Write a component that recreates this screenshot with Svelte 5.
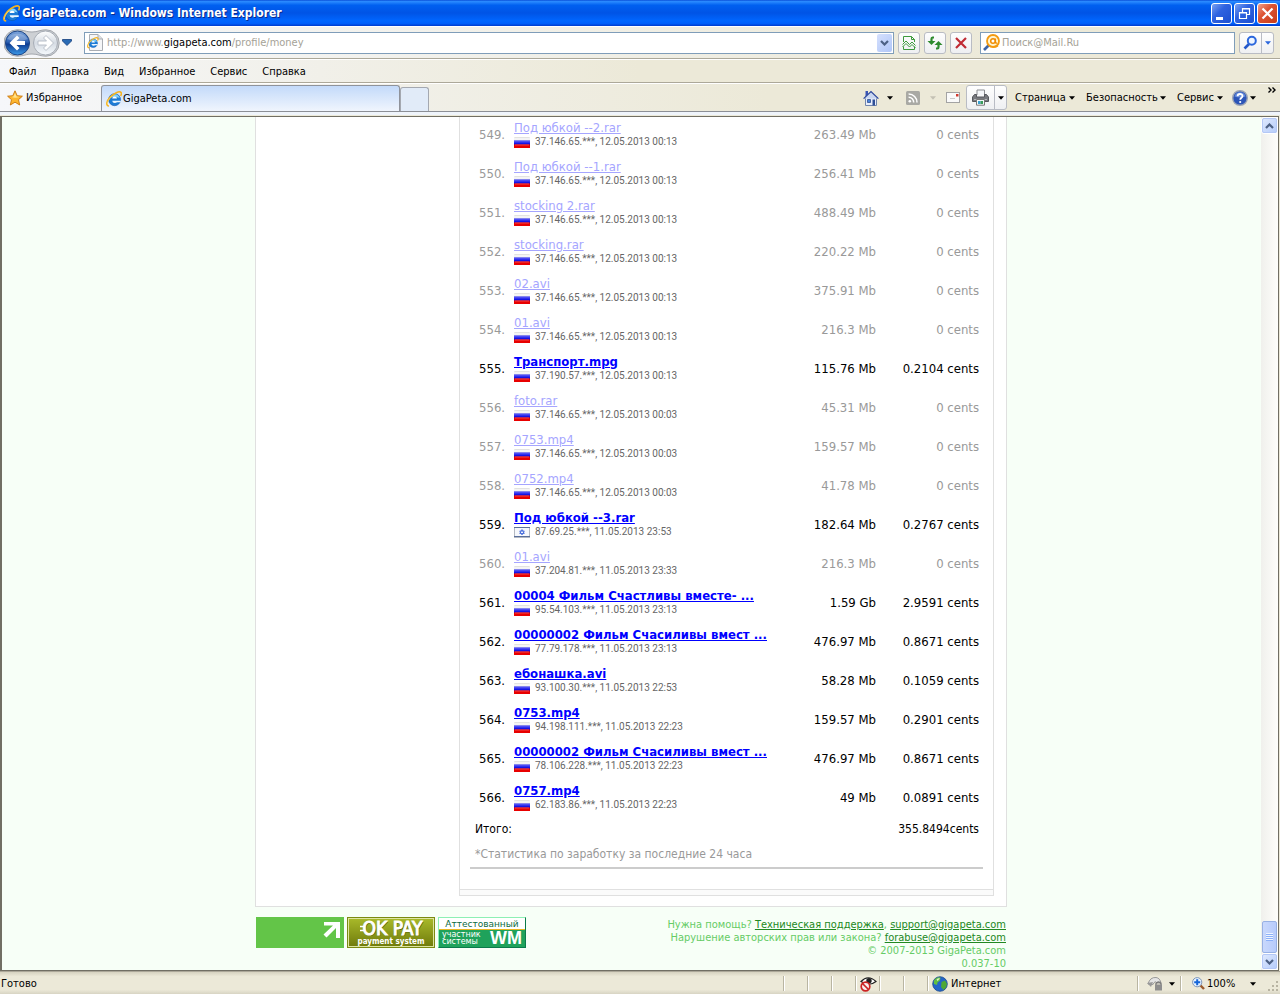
<script lang="ts">
  type Row = { n: number; name: string; ip: string; when: string; size: string; cents: string; paid?: boolean; il?: boolean };
  const rows: Row[] = [
    { n: 549, name: 'Под юбкой --2.rar', ip: '37.146.65.***', when: '12.05.2013 00:13', size: '263.49 Mb', cents: '0' },
    { n: 550, name: 'Под юбкой --1.rar', ip: '37.146.65.***', when: '12.05.2013 00:13', size: '256.41 Mb', cents: '0' },
    { n: 551, name: 'stocking 2.rar', ip: '37.146.65.***', when: '12.05.2013 00:13', size: '488.49 Mb', cents: '0' },
    { n: 552, name: 'stocking.rar', ip: '37.146.65.***', when: '12.05.2013 00:13', size: '220.22 Mb', cents: '0' },
    { n: 553, name: '02.avi', ip: '37.146.65.***', when: '12.05.2013 00:13', size: '375.91 Mb', cents: '0' },
    { n: 554, name: '01.avi', ip: '37.146.65.***', when: '12.05.2013 00:13', size: '216.3 Mb', cents: '0' },
    { n: 555, name: 'Транспорт.mpg', ip: '37.190.57.***', when: '12.05.2013 00:13', size: '115.76 Mb', cents: '0.2104', paid: true },
    { n: 556, name: 'foto.rar', ip: '37.146.65.***', when: '12.05.2013 00:03', size: '45.31 Mb', cents: '0' },
    { n: 557, name: '0753.mp4', ip: '37.146.65.***', when: '12.05.2013 00:03', size: '159.57 Mb', cents: '0' },
    { n: 558, name: '0752.mp4', ip: '37.146.65.***', when: '12.05.2013 00:03', size: '41.78 Mb', cents: '0' },
    { n: 559, name: 'Под юбкой --3.rar', ip: '87.69.25.***', when: '11.05.2013 23:53', size: '182.64 Mb', cents: '0.2767', paid: true, il: true },
    { n: 560, name: '01.avi', ip: '37.204.81.***', when: '11.05.2013 23:33', size: '216.3 Mb', cents: '0' },
    { n: 561, name: '00004 Фильм Счастливы вместе- ...', ip: '95.54.103.***', when: '11.05.2013 23:13', size: '1.59 Gb', cents: '2.9591', paid: true },
    { n: 562, name: '00000002 Фильм Счасиливы вмест ...', ip: '77.79.178.***', when: '11.05.2013 23:13', size: '476.97 Mb', cents: '0.8671', paid: true },
    { n: 563, name: 'ебонашка.avi', ip: '93.100.30.***', when: '11.05.2013 22:53', size: '58.28 Mb', cents: '0.1059', paid: true },
    { n: 564, name: '0753.mp4', ip: '94.198.111.***', when: '11.05.2013 22:23', size: '159.57 Mb', cents: '0.2901', paid: true },
    { n: 565, name: '00000002 Фильм Счасиливы вмест ...', ip: '78.106.228.***', when: '11.05.2013 22:23', size: '476.97 Mb', cents: '0.8671', paid: true },
    { n: 566, name: '0757.mp4', ip: '62.183.86.***', when: '11.05.2013 22:23', size: '49 Mb', cents: '0.0891', paid: true },
  ];
  const menu = ['Файл', 'Правка', 'Вид', 'Избранное', 'Сервис', 'Справка'];
</script>

{#snippet logo()}
  <circle cx="8.600" cy="8.700" r="6" fill="#1c7bd6" stroke="#0b58b0" stroke-width=".6" />
  <path d="M3.500 7Q5 3 9 3.200 12.500 3.500 13.800 7 8 5 3.500 7Z" fill="#7fd0fa" />
  <path d="M6.200 7.500Q6.500 5.500 8.600 5.500 10.800 5.500 11 7.500Z" fill="#fff" />
  <path d="M6.200 9.700H14.800V11.300H11Q10.200 12 8.700 12 6.500 12 6.200 9.700Z" fill="#e9f5ff" />
  <path d="M3 15C-.5 14.800 .6 10 4 6.400 7.800 2.300 13.400 -.4 15 1.400 15.700 2.300 15.300 3.800 14.600 5" fill="none" stroke="#f6b31f" stroke-width="1.600" />
  <path d="M1.400 13.200C1.200 11 3 7.900 5.700 5.300" fill="none" stroke="#ffe27a" stroke-width=".6" />
{/snippet}

{#snippet ie(size: number)}
  <svg width={size} height={size} viewBox="0 0 16 16" aria-hidden="true">{@render logo()}</svg>
{/snippet}

{#snippet arrow()}
  <svg class="arrow" width="7" height="4" viewBox="0 0 7 4" aria-hidden="true"><path d="M0 0H7L3.5 4Z" fill="currentColor" /></svg>
{/snippet}

{#snippet chevron(up: boolean)}
  <svg width="9" height="6" viewBox="0 0 9 6" aria-hidden="true"><path d={up ? 'M1 5L4.5 1.5 8 5' : 'M1 1L4.5 4.5 8 1'} fill="none" stroke="#4d6185" stroke-width="2.2" /></svg>
{/snippet}

<div class="window">
  <header class="title">
    {@render ie(17)}
    <h1>GigaPeta.com - Windows Internet Explorer</h1>
    <div class="winbtns">
      <button aria-label="Свернуть"><svg width="19" height="19" viewBox="0 0 19 19"><path d="M4 13H11V16H4Z" fill="#fff" /></svg></button>
      <button aria-label="Восстановить"><svg width="19" height="19" viewBox="0 0 19 19"><path d="M7.500 8V4.500H14.500V10.500H12M7 5H15M4.500 8.500H11.500V14.500H4.500ZM4 9H12" fill="none" stroke="#fff" stroke-width="1.200" /></svg></button>
      <button class="close" aria-label="Закрыть"><svg width="19" height="19" viewBox="0 0 19 19"><path d="M4.500 4.500L14.500 14.500M14.500 4.500L4.500 14.500" stroke="#fff" stroke-width="2.200" /></svg></button>
    </div>
  </header>

  <nav class="address" aria-label="Адрес">
    <svg width="56" height="28" viewBox="0 0 56 28" aria-hidden="true">
      <defs>
        <linearGradient id="back" x1="0" y1="0" x2="0" y2="1"><stop offset="0" stop-color="#7ea6dd" /><stop offset=".45" stop-color="#2f63b4" /><stop offset=".55" stop-color="#0d3c92" /><stop offset="1" stop-color="#3d9be9" /></linearGradient>
        <linearGradient id="fwd" x1="0" y1="0" x2="0" y2="1"><stop offset="0" stop-color="#fff" /><stop offset=".5" stop-color="#d5dbe3" /><stop offset="1" stop-color="#f6fafd" /></linearGradient>
      </defs>
      <path d="M13 .8C20 .8 22 3 28 3S36 .8 42 .8A13.200 13.200 0 0 1 42 27.200C36 27.200 34 25 28 25S20 27.200 13 27.200A13.200 13.200 0 0 1 13 .8Z" fill="#cdd0d4" stroke="#a3a7ad" />
      <circle cx="13.500" cy="14" r="12" fill="url(#back)" stroke="#1d4585" />
      <path d="M3.500 10C6 3.500 20 2.500 23.500 10 17 13 10 13 3.500 10Z" fill="#fff" opacity=".25" />
      <path d="M5.500 14L13 6.500 15.500 9 12.500 12H21V16H12.500L15.500 19 13 21.500Z" fill="#fff" />
      <circle cx="41.500" cy="14" r="12" fill="url(#fwd)" stroke="#a6acb5" />
      <path d="M49.500 14L42 6.500 39.500 9 42.500 12H34V16H42.500L39.500 19 42 21.500Z" fill="#fff" stroke="#b3bac4" stroke-width=".9" />
    </svg>
    <svg class="hist" width="10" height="7" viewBox="0 0 10 7" aria-hidden="true"><path d="M.500 .500H9.500V2L5 6.500 .500 2Z" fill="#2a6bb5" stroke="#143e7c" stroke-width=".8" /></svg>
    <div class="field url">
      <svg width="16" height="17" viewBox="0 0 16 17" aria-hidden="true"><path d="M2.500 .500H11L15.500 5V16.500H2.500Z" fill="#f5f6f8" stroke="#a9adb3" /><path d="M11 .500V5H15.500" fill="#dde0e4" stroke="#a9adb3" /><g transform="translate(0 3) scale(.72)">{@render logo()}</g></svg>
      <a href="#money">http://www.<b>gigapeta.com</b>/profile/money</a>
      <button class="drop" aria-label="Показать адреса">{@render chevron(false)}</button>
    </div>
    <button class="tool" aria-label="Режим совместимости"><svg width="16" height="16" viewBox="0 0 16 16"><path d="M2.500 7V1.500H10.500L13.500 4.500V7M2.500 11.500V14.500H13.500V11.500M10.500 1.500V4.500H13.500" fill="none" stroke="#3d9a3d" /><path d="M1.500 9.500L5 6 8.500 9.500 11 7 14.500 10.500M1.500 12L5 8.500 8.500 12 11 9.500 14.500 13" fill="none" stroke="#3d9a3d" /></svg></button>
    <button class="tool" aria-label="Обновить"><svg width="16" height="16" viewBox="0 0 16 16"><path d="M7 2.500H5.500Q4.500 2.500 4.500 4V7" fill="none" stroke="#2d8a2d" stroke-width="2.200" /><path d="M.500 6H8.500L4.500 10Z" fill="#2d8a2d" /><path d="M9 13.500H10.500Q11.500 13.500 11.500 12V9" fill="none" stroke="#2d8a2d" stroke-width="2.200" /><path d="M7.500 10H15.500L11.500 6Z" fill="#2d8a2d" /></svg></button>
    <button class="tool" aria-label="Остановить"><svg width="16" height="16" viewBox="0 0 16 16"><path d="M3 3L13 13M13 3L3 13" stroke="#c02b34" stroke-width="2.200" /></svg></button>
    <div class="field search">
      <svg width="17" height="17" viewBox="0 0 17 17" aria-hidden="true"><path d="M1 16L6 11" stroke="#3c64a8" stroke-width="2.600" /><circle cx="10" cy="7" r="6" fill="#fff4d0" stroke="#f39a10" stroke-width="1.800" /><circle cx="10" cy="7" r="2.300" fill="#fff" stroke="#f08c00" stroke-width="1.500" /><path d="M12.400 4.500V8Q12.600 9.600 14.200 9" stroke="#f08c00" stroke-width="1.400" fill="none" /><path d="M10 13Q13 13.300 15 11.600" stroke="#f39a10" stroke-width="1.400" fill="none" /></svg>
      <input aria-label="Поиск" placeholder="Поиск@Mail.Ru" />
    </div>
    <div class="split find">
      <button aria-label="Найти"><svg width="15" height="15" viewBox="0 0 15 15"><path d="M1.500 13.500L6 9" stroke="#2457c9" stroke-width="2.600" /><circle cx="8.800" cy="5.800" r="4" fill="#eef5ff" stroke="#2b67dd" stroke-width="2" /></svg></button>
      <button aria-label="Параметры поиска">{@render arrow()}</button>
    </div>
  </nav>

  <nav class="menu" aria-label="Меню">
    {#each menu as m}<button>{m}</button>{/each}
  </nav>

  <div class="tabs">
    <button class="fav">
      <svg width="16" height="16" viewBox="0 0 16 16" aria-hidden="true"><path d="M8 .8L10.200 5.700 15.400 6.200 11.500 9.700 12.700 15 8 12.200 3.300 15 4.500 9.700 .6 6.200 5.800 5.700Z" fill="#fdb62f" stroke="#c9760c" stroke-width=".9" /><path d="M8 3L9.500 6.500 12.500 7Q8 8.500 4.500 7L6.500 6.500Z" fill="#ffe38f" /></svg>
      Избранное
    </button>
    <button class="tab">{@render ie(16)}GigaPeta.com</button>
    <button class="newtab" aria-label="Новая вкладка"></button>
    <div class="cmds">
      <button class="cmd home" aria-label="Домой">
        <svg width="16" height="16" viewBox="0 0 16 16"><path d="M2.500 7.500H13.500V15.500H2.500Z" fill="#e8eefb" stroke="#7286ad" /><path d="M2.500 1H5V5L2.500 7Z" fill="#3a55b4" /><path d="M.6 8.600L8 1.600 15.400 8.600" fill="#c9d6f0" stroke="#2c479b" stroke-width="1.300" /><path d="M4.500 9.500H7.500V12.500H4.500Z" fill="#4a83d9" stroke="#2e4e91" stroke-width=".8" /><path d="M9.500 9.500H12V15.500H9.500Z" fill="#2f4f96" /></svg>
        {@render arrow()}
      </button>
      <button class="cmd feed" aria-label="Веб-каналы">
        <svg width="14" height="14" viewBox="0 0 14 14"><rect width="14" height="14" rx="1.500" fill="#a9a9a4" /><circle cx="3.800" cy="10.300" r="1.300" fill="#fff" /><path d="M2.600 6.300A5 5 0 0 1 7.700 11.500M2.600 3A8.300 8.300 0 0 1 11 11.500" fill="none" stroke="#fff" stroke-width="1.500" /></svg>
        {@render arrow()}
      </button>
      <button class="cmd" aria-label="Читать почту"><svg width="14" height="11" viewBox="0 0 14 11"><rect x=".5" y=".5" width="13" height="10" fill="#fafafa" stroke="#a3a3a3" /><path d="M10 2H12.500V4.500H10Z" fill="#d23b2f" /><path d="M4 6.500H9" stroke="#c9c9c9" /></svg></button>
      <div class="split print">
        <button aria-label="Печать"><svg width="17" height="17" viewBox="0 0 17 17"><path d="M5 6V1H12.500V6" fill="#f4f6f9" stroke="#8a8c90" /><path d="M2.500 5.500H4.500V8H12.500V5.500H14.500L16.500 8V12.500H.500V8Z" fill="#77797e" stroke="#55575c" /><path d="M2 10.500H15" stroke="#b5b7bb" /><path d="M4.500 10.500H12.500V16.200H4.500Z" fill="#f5f8fb" stroke="#777" /><path d="M6 12H8.500V15H6Z" fill="#39a0d0" /><path d="M8.500 12H11V15H8.500Z" fill="#3b9b58" /></svg></button>
        <button aria-label="Параметры печати">{@render arrow()}</button>
      </div>
      <button class="cmd page">Страница {@render arrow()}</button>
      <button class="cmd safe">Безопасность {@render arrow()}</button>
      <button class="cmd serv">Сервис {@render arrow()}</button>
      <button class="cmd help" aria-label="Справка">
        <svg width="16" height="16" viewBox="0 0 16 16"><circle cx="8" cy="8" r="7.300" fill="#2c55b8" stroke="#9aa3b5" stroke-width="1.400" /><path d="M2.500 6.500A5.700 5.700 0 0 1 13.500 6.500Q8 8.500 2.500 6.500Z" fill="#7fa2ea" opacity=".7" /><path d="M5.600 6.200C5.600 3.300 10.500 3.300 10.500 6 10.500 7.700 8.200 7.700 8.200 9.700" fill="none" stroke="#fff" stroke-width="1.800" /><circle cx="8.200" cy="12" r="1.100" fill="#fff" /></svg>
        {@render arrow()}
      </button>
      <button class="more" aria-label="Ещё"><svg width="8" height="6" viewBox="0 0 8 6"><path d="M.5 .5L3 3 .5 5.500M4.500 .5L7 3 4.500 5.500" fill="none" stroke="#000" stroke-width="1.400" /></svg></button>
    </div>
  </div>

  <div class="view">
    <main>
      <div class="sheet">
        <section class="panel">
          <table>
            <tbody>
              {#each rows as r}
                <tr class:paid={r.paid}>
                  <td class="num">{r.n}.</td>
                  <td class="file">
                    <a href="#file-{r.n}">{r.name}</a>
                    <div class="meta">
                      <svg width="16" height="11" viewBox="0 0 16 11" aria-hidden="true">
                        {#if r.il}
                          <rect x=".5" y=".5" width="15" height="10" fill="#f6f8fc" stroke="#b3b8c2" /><path d="M0 .5H16M0 9.500H16" stroke="#5a6f9c" /><path d="M8 2.500L10.300 6.500H5.700ZM8 8L5.700 4H10.300Z" fill="none" stroke="#3b63d9" stroke-width=".8" />
                        {:else}
                          <path d="M0 0H16V4H0Z" fill="#f4f4f4" /><path d="M0 3.500H16V8H0Z" fill="#1414e6" /><path d="M0 4H16V5.500H0Z" fill="#4a4af5" /><path d="M0 7.500H16V11H0Z" fill="#e80000" /><path d="M1 7.500H15V8.500H1Z" fill="#f54444" /><path d="M.5 .5H15.500" stroke="#e2e2e2" />
                        {/if}
                      </svg>
                      {r.ip}, {r.when}
                    </div>
                  </td>
                  <td class="size">{r.size}</td>
                  <td class="cents">{r.cents} cents</td>
                </tr>
              {/each}
            </tbody>
            <tfoot>
              <tr class="total"><td colspan="3">Итого:</td><td class="cents">355.8494cents</td></tr>
            </tfoot>
          </table>
          <p class="note">*Статистика по заработку за последние 24 часа</p>
        </section>
        <div class="strip"></div>
      </div>
      <footer>
        <div class="banners">
          <a class="green" href="#stat" aria-label="Статистика"><svg width="17" height="17" viewBox="0 0 17 17"><path d="M1 0H17V16H13V6L3.500 15.500 .5 12.500 10 3.500H1Z" fill="#fff" /></svg></a>
          <a class="okpay" href="#okpay">
            <span class="ok"><svg width="5" height="7" viewBox="0 0 5 7" aria-hidden="true"><path d="M0 1.500H5M0 5.500H5" stroke="#fff" stroke-width="1.600" /></svg>OK PAY</span>
            <span class="sub">payment system</span>
          </a>
          <a class="wm" href="#wm"><span class="att">Аттестованный</span><span class="low"><span class="part">участник<br />системы</span><strong>WM</strong></span></a>
        </div>
        <address>
          Нужна помощь? <a href="#support">Техническая поддержка</a>, <a href="#mail">support@gigapeta.com</a><br />
          Нарушение авторских прав или закона? <a href="#abuse">forabuse@gigapeta.com</a><br />
          © 2007-2013 GigaPeta.com<br />
          0.037-10
        </address>
      </footer>
    </main>
    <div class="scroll">
      <button aria-label="Вверх">{@render chevron(true)}</button>
      <div class="track"><div class="thumb"></div></div>
      <button aria-label="Вниз">{@render chevron(false)}</button>
    </div>
  </div>

  <div class="status">
    <span class="done">Готово</span>
    <span class="cell"></span><span class="cell"></span><span class="cell"></span>
    <span class="cell"><svg width="17" height="16" viewBox="0 0 17 16" aria-hidden="true"><path d="M1 5.500Q8-2 16 5.500 9 11 1 5.500Z" fill="#fff" stroke="#222" stroke-width="1.200" /><circle cx="9" cy="4.800" r="2.700" fill="#222" /><circle cx="5.500" cy="10.500" r="4.300" fill="#f7eeee" stroke="#cc2222" stroke-width="1.700" /><path d="M2.500 7.500L8.500 13.500" stroke="#cc2222" stroke-width="1.700" /></svg></span>
    <span class="cell"></span><span class="cell"></span>
    <span class="cell zone">
      <svg width="16" height="16" viewBox="0 0 16 16" aria-hidden="true"><circle cx="8" cy="8" r="7.300" fill="#2465c8" stroke="#1a4a8c" stroke-width=".8" /><path d="M3 3Q6 .5 8.500 1.500L8 4.500 5.500 6.500 5 9 2 8Q1 5 3 3Z" fill="#62bf3f" /><path d="M9.500 6L13 4.500 15 8Q14.500 12 11.500 14L9 11Z" fill="#4ea836" /><path d="M4.500 3.500Q6.500 1.500 8 2.500L5.500 5Z" fill="#d8f3c8" /></svg>
      Интернет
    </span>
    <span class="cell guard"><svg width="16" height="15" viewBox="0 0 16 15" aria-hidden="true"><path d="M1 8Q3 1 9 1.500 13 2 14 7H10Q8 4 6 8.500Z" fill="#e4e4e4" stroke="#999" /><path d="M0 7L6 6 4 11Z" fill="#999" /><path d="M9 9V7.500Q11.500 4.500 14 7.500V9" fill="none" stroke="#777" stroke-width="1.300" /><rect x="8" y="8.500" width="7" height="6" fill="#8e8e8e" /></svg>{@render arrow()}</span>
    <span class="cell zoom"><svg width="13" height="13" viewBox="0 0 13 13" aria-hidden="true"><path d="M8 8L12 12" stroke="#9a5a2c" stroke-width="2.400" /><circle cx="5.200" cy="5.200" r="4.600" fill="#e6f2ff" stroke="#7d94b5" /><path d="M5.200 2.200V8.200M2.200 5.200H8.200" stroke="#1565d8" stroke-width="2" /></svg><span class="pct">100%</span>{@render arrow()}
      <svg class="grip" width="12" height="12" viewBox="0 0 12 12" aria-hidden="true"><path d="M8 0H10V2H8ZM4 4H6V6H4ZM8 4H10V6H8ZM0 8H2V10H0ZM4 8H6V10H4ZM8 8H10V10H8Z" fill="#b8b4a2" /></svg>
    </span>
  </div>
</div>

<style>
  :global(body) { background: #ece9d8; }
  .window { display: flex; flex-direction: column; min-height: 100vh; box-sizing: border-box; font: 11px/13px 'DejaVu Sans Condensed', Tahoma, sans-serif; color: #000; }
  button { font: inherit; color: inherit; background: none; border: 0; padding: 0; margin: 0; display: flex; align-items: center; }
  svg { flex: none; display: block; }

  .title { display: flex; align-items: center; height: 26px; padding: 0 2px 0 3px; background: linear-gradient(#0a4fd8, #2a8bff 6%, #0060f0 20%, #0054e6 50%, #0066ff 80%, #0060fb 90%, #003bcd); }
  h1 { flex: 1; margin: 0 0 0 2px; font: bold 12px/16px 'DejaVu Sans Condensed', 'Trebuchet MS', sans-serif; color: #fff; text-shadow: 1px 1px 0 #0a2a8c; }
  .winbtns { display: flex; gap: 2px; }
  .winbtns button { width: 21px; height: 21px; box-sizing: border-box; border: 1px solid #fff; border-radius: 3px; background: linear-gradient(135deg, #7ba2f2, #2f63e0 40%, #1c4fd0); }
  .winbtns .close { background: linear-gradient(135deg, #f0a08a, #dd5433 40%, #c83c18); }

  .address { display: flex; align-items: center; height: 31px; padding: 0 6px 0 4px; border-bottom: 1px solid #aca899; background: linear-gradient(90deg, #f6f7fa, #ece9d8 80%); border-top: 1px solid #fff; }
  .hist { margin: 0 12px 0 2px; }
  .field { display: flex; align-items: center; height: 22px; box-sizing: border-box; background: #fff; border: 1px solid #7f9db9; color: #a09d90; }
  .url { flex: 1; padding-left: 2px; margin-right: 4px; }
  .url a { flex: 1; margin-left: 4px; color: #a5a297; text-decoration: none; }
  .url b { font-weight: normal; color: #000; }
  .drop { width: 15px; height: 18px; margin-right: 1px; justify-content: center; border-radius: 2px; background: linear-gradient(135deg, #d5e0fd, #b0c6f8); }
  .tool { width: 22px; height: 22px; margin-right: 4px; box-sizing: border-box; justify-content: center; border: 1px solid #b9bcc4; border-radius: 3px; background: linear-gradient(#fdfdfd, #eeeff2); }
  .search { width: 255px; padding-left: 2px; margin: 0 4px; }
  .search input { flex: 1; min-width: 0; margin-left: 2px; padding: 0; border: 0; outline: 0; background: none; font: inherit; color: #000; }
  .search input::placeholder { color: #a5a297; opacity: 1; }
  .split { display: flex; box-sizing: border-box; border: 1px solid #b9bcc4; border-radius: 3px; background: linear-gradient(#fefefe, #eff0f2); }
  .split button { justify-content: center; flex: 1; }
  .split button + button { flex: none; width: 12px; border-left: 1px solid #b9bcc4; }
  .find { width: 35px; height: 22px; color: #2b67dd; }

  .menu { display: flex; align-items: center; gap: 15px; height: 21px; padding: 1px 9px 0; border-top: 1px solid #fff; border-bottom: 1px solid #aca899; background: linear-gradient(90deg, #f6f7fa, #ece9d8 50%); }

  .tabs { display: flex; align-items: flex-end; height: 27px; padding: 0 4px 0 7px; border-top: 1px solid #fff; border-bottom: 1px solid #8c8f96; box-shadow: 0 3px 0 #eff4fb; background: linear-gradient(90deg, #f6f7fa, #ece9d8 60%); }
  .fav { align-self: center; gap: 3px; width: 94px; }
  .tab { width: 299px; height: 26px; box-sizing: border-box; gap: 1px; padding-left: 4px; border: 1px solid #8f939b; border-bottom: 0; border-radius: 3px 3px 0 0; background: linear-gradient(#c3dafa, #f0f5fd); }
  .newtab { width: 29px; height: 24px; box-sizing: border-box; border: 1px solid #a4a8b0; border-bottom: 0; border-radius: 3px 3px 0 0; background: #e1ebf8; }
  .cmds { flex: 1; display: flex; justify-content: flex-end; align-items: center; height: 27px; }
  .cmd { justify-content: space-between; }
  .home { width: 30px; margin-right: 13px; }
  .feed { width: 30px; margin-right: 10px; color: #c4c1b4; }
  .print { width: 41px; height: 25px; margin: 0 8px 0 6px; }
  .page { width: 60px; margin-right: 11px; }
  .safe { width: 80px; margin-right: 11px; }
  .serv { width: 46px; margin-right: 9px; }
  .help { width: 24px; margin-right: 12px; }
  .more { align-self: flex-start; padding-top: 3px; }
  .arrow { width: 6px; height: 4px; }

  .view { flex: 1; display: flex; overflow: hidden; margin: 4px 1px 0 0; border: 1px solid #716f64; border-left-width: 2px; background: #f7fff7; }
  main { flex: 1; min-width: 0; margin-top: -2px; padding-right: 1px; }
  .sheet { width: 752px; box-sizing: border-box; margin: 0 auto; padding: 0 12px 10px 203px; border: 1px solid #e0e0e0; border-top: 0; background: #fff; }
  .panel { border: 1px solid #e0e0e0; border-top: 0; padding: 0 10px 20px; }
  .strip { height: 5px; border: 1px solid #e0e0e0; border-top: 0; background: #fbfbfb; }
  table { width: 100%; border-collapse: collapse; font-size: 13px; line-height: 14px; color: #999; }
  td { padding: 0; vertical-align: middle; }
  tbody tr { height: 39px; }
  tbody .num { width: 44px; padding-left: 9px; box-sizing: border-box; }
  .file { line-height: 14px; padding-bottom: 1px; }
  .file a { display: inline-block; color: #a5a5ff; }
  .size { width: 100px; text-align: right; }
  .cents { width: 107px; text-align: right; padding-right: 4px; box-sizing: border-box; }
  .meta { display: flex; gap: 5px; font: 10px/13px Roboto, sans-serif; color: #666; }
  .meta svg { margin-top: 2px; }
  .paid { color: #000; }
  .file .meta { font-weight: normal; }
  .paid a { font-weight: bold; color: #0000ff; }
  .total { height: 23px; font-size: 12px; color: #000; }
  .total td:first-child { padding-left: 5px; }
  .note { margin: 0; padding: 7px 5px 6px; font-size: 12px; line-height: 14px; color: #999; border-bottom: 2px solid #ccc; }
  footer { display: flex; justify-content: space-between; width: 750px; margin: 10px auto 0; }
  .banners { display: flex; gap: 3px; }
  .banners a { width: 88px; height: 31px; box-sizing: border-box; text-decoration: none; }
  .green { background: #63c548; padding: 5px 4px; display: flex; justify-content: flex-end; }
  .okpay { display: flex; flex-direction: column; align-items: center; color: #fff; border: 1px solid #7b8a12; outline: 1px solid #dde5a0; outline-offset: -2px; background: linear-gradient(#a9ba2a, #6f7a0c); }
  .ok { display: flex; align-items: center; font-size: 19px; line-height: 20px; text-shadow: 1px 1px 0 #5a640a; -webkit-text-stroke: 1px #fff; }
  .ok svg { margin-right: -2px; }
  .sub { font-weight: bold; font-size: 8px; line-height: 8px; }
  .wm { display: flex; flex-direction: column; border: 1px solid #0b7a4b; border-top-color: #8df0b4; border-left-color: #8df0b4; background: #fff; color: #0b6b3f; }
  .att { height: 11px; text-align: center; font: 9px/12px 'DejaVu Sans', sans-serif; border-bottom: 1px solid #e8b923; }
  .low { flex: 1; display: flex; justify-content: space-between; padding: 0 3px; background: #1fa25b; color: #fff; }
  .part { font: 8px/7px 'DejaVu Sans', sans-serif; padding-top: 1px; }
  strong { font: bold 18px/17px 'Liberation Sans', sans-serif; }
  address { padding-top: 1px; font-style: normal; text-align: right; color: #66cc66; }
  address a { color: #228822; }

  .scroll { display: flex; flex-direction: column; width: 17px; background: linear-gradient(90deg, #f0f0ec, #fefefb); }
  .scroll button { height: 17px; justify-content: center; box-sizing: border-box; border: 1px solid #fff; outline: 1px solid #b4c8f6; outline-offset: -2px; border-radius: 3px; background: linear-gradient(135deg, #e1eafe, #b4cbfa); }
  .track { flex: 1; display: flex; flex-direction: column; justify-content: flex-end; }
  .thumb { height: 32px; margin: 0 1px; box-sizing: border-box; border: 1px solid #98b1e4; border-radius: 2px; background: repeating-linear-gradient(#eef4fe 0 1px, #8cb0f8 1px 2px) center / 7px 8px no-repeat, linear-gradient(90deg, #c9d8fc, #b7cbfb); }

  .status { display: flex; align-items: stretch; height: 21px; padding-top: 1px; border-top: 1px solid #aca899; background: linear-gradient(#d6d2c0, #ece9d8 20%, #ece9d8 80%, #d8d4c3); }
  .done { flex: 1; align-self: center; padding-left: 1px; }
  .cell { display: flex; align-items: center; width: 24px; margin: 3px 0; box-sizing: border-box; padding-left: 4px; border-left: 1px solid #b9b5a2; box-shadow: inset 1px 0 0 #fff; }
  .zone { width: 210px; gap: 3px; }
  .guard { width: 43px; padding: 0 5px 0 9px; justify-content: space-between; }
  .zoom { width: 100px; padding-left: 11px; }
  .pct { width: 44px; margin-left: 2px; }
  .grip { margin: 6px 0 0 12px; }
</style>
